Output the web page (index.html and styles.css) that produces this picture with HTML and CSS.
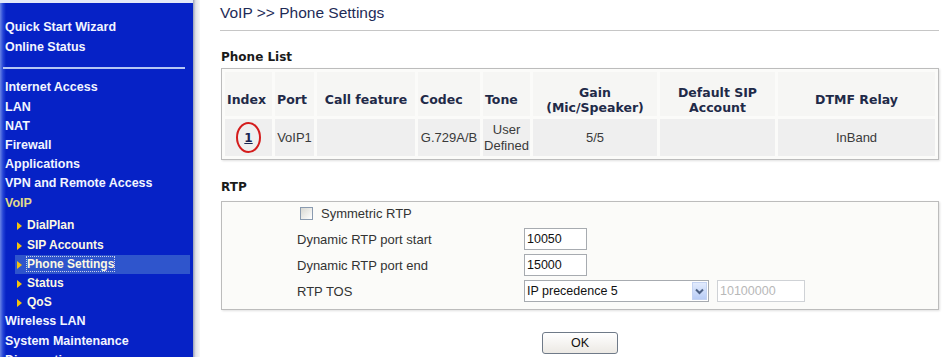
FILE: index.html
```html
<!DOCTYPE html>
<html lang="en">
<head>
  <meta charset="UTF-8">
  <title>VoIP &gt;&gt; Phone Settings</title>
  <link rel="stylesheet" href="styles.css">
</head>
<body>
  <div class="page">
    <!-- left navigation frame -->
    <nav class="sidebar">
      <ul class="menu menu-top">
        <li>Quick Start Wizard</li>
        <li>Online Status</li>
      </ul>
      <hr class="menu-rule">
      <ul class="menu">
        <li>Internet Access</li>
        <li>LAN</li>
        <li>NAT</li>
        <li>Firewall</li>
        <li>Applications</li>
        <li>VPN and Remote Access</li>
        <li class="is-open">VoIP
          <ul class="submenu">
            <li>DialPlan</li>
            <li>SIP Accounts</li>
            <li class="is-current"><span class="focus">Phone Settings</span></li>
            <li>Status</li>
            <li>QoS</li>
          </ul>
        </li>
        <li>Wireless LAN</li>
        <li>System Maintenance</li>
        <li>Diagnostics</li>
      </ul>
    </nav>
    <div class="frame-edge"></div>

    <main class="content">
      <h1 class="page-title">VoIP &gt;&gt; Phone Settings</h1>

      <h2 class="section-title">Phone List</h2>
      <div class="panel">
        <table class="phone-table">
          <colgroup>
            <col class="col-index">
            <col class="col-port">
            <col class="col-call">
            <col class="col-codec">
            <col class="col-tone">
            <col class="col-gain">
            <col class="col-sip">
            <col class="col-dtmf">
          </colgroup>
          <thead>
            <tr>
              <th class="left">Index</th>
              <th class="left">Port</th>
              <th>Call feature</th>
              <th class="left">Codec</th>
              <th class="left">Tone</th>
              <th>Gain<br>(Mic/Speaker)</th>
              <th>Default SIP<br>Account</th>
              <th>DTMF Relay</th>
            </tr>
          </thead>
          <tbody>
            <tr>
              <td><a class="index-link" href="#">1</a></td>
              <td>VoIP1</td>
              <td></td>
              <td>G.729A/B</td>
              <td>User Defined</td>
              <td>5/5</td>
              <td></td>
              <td>InBand</td>
            </tr>
          </tbody>
        </table>
      </div>

      <h2 class="section-title rtp-title">RTP</h2>
      <div class="panel">
        <div class="rtp-form">
          <label class="check-row"><input type="checkbox" class="check"> Symmetric RTP</label>
          <div>Dynamic RTP port start</div>
          <div><input class="text-field" type="text" value="10050"></div>
          <div>Dynamic RTP port end</div>
          <div><input class="text-field" type="text" value="15000"></div>
          <div>RTP TOS</div>
          <div class="tos-row">
            <div class="select-box">
              <select>
                <option>IP precedence 5</option>
              </select>
              <span class="select-arrow">
                <svg width="9" height="7" viewBox="0 0 9 7"><path d="M1 1.5 L4.5 5 L8 1.5" fill="none" stroke="#4d6185" stroke-width="2"/></svg>
              </span>
            </div>
            <input class="text-field is-disabled" type="text" value="10100000" disabled>
          </div>
        </div>
      </div>

      <div class="actions">
        <button class="button" type="button">OK</button>
      </div>
    </main>
  </div>
</body>
</html>
```

FILE: styles.css
```css
html, body {
  margin: 0;
  padding: 0;
  height: 100%;
  background: #ffffff;
}

.page {
  display: flex;
  height: 357px;
  overflow: hidden;
}

/* ---- sidebar ---- */
.sidebar {
  width: 193px;
  flex: none;
  box-sizing: border-box;
  border-top: 3px solid #e4e9f8;
  background: linear-gradient(to right, #6a84e4 0, #2444d6 3px, #0622c6 6px, #0622c6 100%);
  font: bold 12.5px/19.2px "Liberation Sans", Arial, sans-serif;
  color: #f2f5ff;
  overflow: hidden;
}

.menu {
  list-style: none;
  margin: 0;
  padding: 0 0 0 5px;
}

.menu-top {
  padding-top: 15.4px;
}

.menu-rule {
  height: 2px;
  margin: 10.2px 8px 9.4px 3px;
  border: 0;
  background: #b4c6f4;
}

.is-open {
  color: #e2d98c;
}

.submenu {
  list-style: none;
  margin: 3.6px 0 0 0;
  padding: 0;
  font-size: 12px;
  color: #fbf8e2;
}

.submenu li {
  margin: 0 3px 0 10px;
  padding-left: 2px;
}

.submenu li::before {
  content: '';
  display: inline-block;
  border-left: 5px solid #f4c20c;
  border-top: 4.5px solid transparent;
  border-bottom: 4.5px solid transparent;
  margin-right: 5px;
  vertical-align: -1px;
}

.submenu .is-current {
  background: #2f55cc;
}

.focus {
  outline: 1px dotted #c8d0ea;
  outline-offset: 0;
}

.frame-edge {
  width: 7px;
  flex: none;
  background: linear-gradient(to right, #9aa0b8, #e2e2e8 40%, #f8f8f8);
}

/* ---- content ---- */
.content {
  flex: 1;
  padding: 0 8px 0 20px;
  font-family: "Liberation Sans", Arial, sans-serif;
}

.page-title {
  margin: 0;
  padding-bottom: 4px;
  font: normal 15.5px/26px "Liberation Sans", Arial, sans-serif;
  color: #1e2b57;
  border-bottom: 1px solid #c6c6c6;
}

.section-title {
  margin: 18px 0 3px 1px;
  font: bold 12px/16px "DejaVu Sans", Verdana, sans-serif;
  color: #1a1a1a;
}

.rtp-title {
  margin-top: 19px;
  margin-bottom: 6px;
}

.panel {
  width: 718px;
  box-sizing: border-box;
  margin-left: 1px;
  border: 1px solid #bcbcbc;
  background: #fbfbf9;
  box-shadow: 1px 1px 2px rgba(0, 0, 0, 0.12);
}

/* phone list table */
.phone-table {
  width: 716px;
  table-layout: fixed;
  border-spacing: 3px;
}

.col-index { width: 47px; }
.col-port { width: 39px; }
.col-call { width: 98px; }
.col-codec { width: 62px; }
.col-tone { width: 47px; }
.col-gain { width: 124px; }
.col-sip { width: 115px; }
.col-dtmf { width: 157px; }

.phone-table th {
  padding: 14px 0 1px;
  font: bold 12.5px/14.5px "DejaVu Sans", Verdana, sans-serif;
  color: #1f2a48;
  background: #f6f6f4;
  vertical-align: middle;
  white-space: nowrap;
}

.phone-table th.left {
  text-align: left;
  padding-left: 2px;
}

.phone-table td {
  height: 37px;
  padding: 0;
  font: 13px/16px "Liberation Sans", Arial, sans-serif;
  color: #3a3a3a;
  background: #efefef;
  text-align: center;
  vertical-align: middle;
}

.index-link {
  position: relative;
  font: bold 12px "DejaVu Sans", Verdana, sans-serif;
  color: #1a2450;
  text-decoration: underline;
}

.index-link::after {
  content: '';
  position: absolute;
  left: 50%;
  top: 50%;
  width: 21px;
  height: 27px;
  margin: -15.5px 0 0 -12.5px;
  border: 2px solid #d41c1c;
  border-radius: 50%;
}

/* RTP form */
.rtp-form {
  display: grid;
  grid-template-columns: 227px auto;
  grid-auto-rows: 22px;
  row-gap: 4px;
  align-items: center;
  padding: 0 0 7px 75px;
  font: 13px "Liberation Sans", Arial, sans-serif;
  color: #333333;
}

.check-row {
  grid-column: 1 / -1;
  display: flex;
  align-items: center;
}

.check {
  appearance: none;
  width: 13px;
  height: 13px;
  margin: 0 8px 0 3px;
  border: 1px solid #8a9bb0;
  background: linear-gradient(135deg, #d8d8d2, #ffffff);
}

.text-field {
  width: 63px;
  height: 22px;
  box-sizing: border-box;
  margin: 0;
  padding: 0 2px;
  border: 1px solid #a7abb0;
  font: 12.5px "Liberation Sans", Arial, sans-serif;
  color: #111111;
  background: #ffffff;
  vertical-align: top;
}

.text-field.is-disabled {
  width: 88px;
  color: #b8b8b8;
  border-color: #cfd2d6;
}

.tos-row {
  display: flex;
  gap: 8px;
}

.select-box {
  position: relative;
  width: 185px;
  height: 22px;
  box-sizing: border-box;
  border: 1px solid #a7abb0;
  background: #ffffff;
}

.select-box select {
  appearance: none;
  width: 100%;
  height: 100%;
  border: 0;
  padding: 0 2px;
  font: 12.5px "Liberation Sans", Arial, sans-serif;
  color: #111111;
  background: transparent;
}

.select-arrow {
  position: absolute;
  top: 1px;
  right: 1px;
  bottom: 1px;
  width: 15px;
  display: flex;
  align-items: center;
  justify-content: center;
  box-sizing: border-box;
  border: 1px solid #c4d3f2;
  background: linear-gradient(#e2ebfd, #b9cdf6);
  pointer-events: none;
}

.actions {
  width: 718px;
  margin: 22px 0 0 1px;
  text-align: center;
}

.button {
  width: 76px;
  height: 22px;
  border: 1px solid #6f7a88;
  border-radius: 3px;
  background: linear-gradient(#ffffff, #ece9e4);
  font: 12.5px "Liberation Sans", Arial, sans-serif;
  color: #111111;
}
```
